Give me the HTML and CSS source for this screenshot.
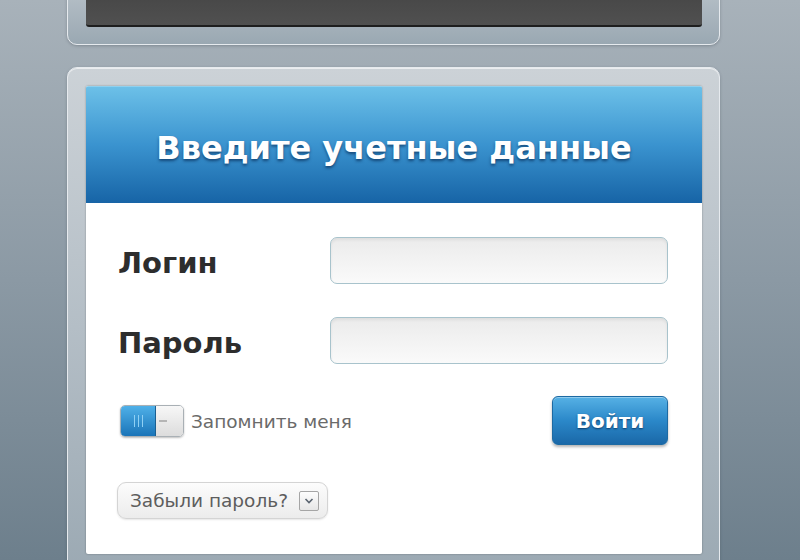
FILE: index.html
```html
<!DOCTYPE html>
<html lang="ru">
<head>
	<meta charset="UTF-8">
	<title>Вход</title>
<link rel="stylesheet" href="styles.css">
</head>
<body>
	<div class="wrap">
		<div class="frame frame_top">
			<div class="dark_bar"></div>
		</div>
		<div class="frame frame_login">
			<div class="card">
				<div class="card_head">
					<h1>Введите учетные данные</h1>
				</div>
				<form class="card_body" onsubmit="return false">
					<div class="row">
						<label for="login">Логин</label>
						<input id="login" type="text">
					</div>
					<div class="row">
						<label for="pass">Пароль</label>
						<input id="pass" type="password">
					</div>
					<div class="row row_actions">
						<div class="remember">
							<span class="toggle">
								<span class="toggle_on"><i></i><i></i><i></i></span>
								<span class="toggle_off"></span>
							</span>
							<span class="remember_text">Запомнить меня</span>
						</div>
						<button class="btn_enter">Войти</button>
					</div>
					<div class="row row_forgot">
						<span class="forgot">Забыли пароль?
							<span class="forgot_arrow">
								<svg width="10" height="6" viewBox="0 0 10 6"><path d="M1.5 1 L5 4.5 L8.5 1" fill="none" stroke="#5a6470" stroke-width="1.6"/></svg>
							</span>
						</span>
					</div>
				</form>
			</div>
		</div>
	</div>
</body>
</html>
```

FILE: styles.css
```css
html,body{
	margin: 0;
	height: 100%;
}
body{
	background: linear-gradient(to bottom, #a8b2ba 0%, #8b99a4 50%, #6d7f8c 100%);
	font-family: "DejaVu Sans", Verdana, sans-serif;
	overflow: hidden;
}
.wrap{
	width: 653px;
	margin-left: 67px;
}
.frame{
	box-sizing: border-box;
	border-radius: 10px;
	background: linear-gradient(to bottom, #ccd2d7 0%, #b4bec6 50%, #9aa8b2 100%);
	border: 1px solid #e6eaee;
	box-shadow: 0 1px 3px rgba(60,70,80,0.35), inset 0 1px 0 rgba(255,255,255,0.6);
}
.frame_top{
	margin-top: -56px;
	padding: 18px 17px 17px 18px;
}
.dark_bar{
	height: 62px;
	border-radius: 3px;
	background: linear-gradient(to bottom, #3e3e3e, #505050);
	border-bottom: 2px solid #1e1e1e;
}
.frame_login{
	margin-top: 22px;
	padding: 18px 17px 20px 18px;
	height: 520px;
}
.card{
	background: #fff;
	border-radius: 2px;
	box-shadow: 0 0 2px rgba(0,0,0,0.35);
	overflow: hidden;
}
.card_head{
	height: 117px;
	padding-top: 5px;
	display: flex;
	align-items: center;
	justify-content: center;
	background: linear-gradient(to bottom, #6cc0e8 0%, #3a93cf 50%, #1764a6 100%);
	border-top: 1px solid #8fd0ee;
	box-sizing: border-box;
}
.card_head h1{
	margin: 0;
	color: #fff;
	font-size: 32px;
	font-weight: bold;
	text-shadow: 0 2px 3px rgba(0,30,70,0.6);
}
.card_body{
	padding: 34px 34px 35px 32px;
	margin: 0;
}
.row{
	display: flex;
	align-items: center;
	justify-content: space-between;
	margin-bottom: 33px;
}
.row label{
	font-size: 29px;
	font-weight: bold;
	color: #2d2d2d;
	padding-top: 4px;
}
.row input{
	box-sizing: border-box;
	width: 338px;
	height: 47px;
	border: 1px solid #a8c3cc;
	border-radius: 7px;
	background: linear-gradient(to bottom, #ebebeb, #fafafa);
	box-shadow: inset 0 2px 3px rgba(0,0,0,0.06);
	outline: none;
}
.row_actions{
	margin-bottom: 37px;
}
.remember{
	display: flex;
	align-items: center;
	padding-left: 2px;
}
.toggle{
	display: flex;
	width: 64px;
	height: 32px;
	box-sizing: border-box;
	border: 1px solid #a9b0b5;
	border-radius: 5px;
	overflow: hidden;
	box-shadow: 0 1px 2px rgba(0,0,0,0.25);
}
.toggle_on{
	width: 34px;
	display: flex;
	justify-content: center;
	align-items: center;
	gap: 3px;
	background: linear-gradient(to bottom, #4fb0e8, #1a74b8);
	border-right: 1px solid #1a5f91;
}
.toggle_on i{
	width: 1px;
	height: 12px;
	background: #8fd0f4;
}
.toggle_off{
	flex: 1;
	position: relative;
	background: linear-gradient(to bottom, #f7f7f7, #dcdcdc);
}
.toggle_off:before{
	content: "";
	position: absolute;
	left: 3px;
	top: 14px;
	width: 8px;
	height: 2px;
	background: #b5b5b5;
}
.remember_text{
	margin-left: 7px;
	font-size: 18.5px;
	color: #6a6a6a;
}
.btn_enter{
	width: 116px;
	height: 49px;
	border: 1px solid #1d6aa3;
	border-radius: 6px;
	background: linear-gradient(to bottom, #56b1e5 0%, #2b88c9 50%, #1a68a8 100%);
	color: #fff;
	font-family: "DejaVu Sans", Verdana, sans-serif;
	font-size: 20px;
	font-weight: bold;
	text-shadow: 0 1px 2px rgba(0,30,70,0.7);
	box-shadow: 0 2px 3px rgba(0,0,0,0.3), inset 0 1px 0 rgba(255,255,255,0.35);
	margin-top: -1px;
}
.row_forgot{
	margin-bottom: 0;
	justify-content: flex-start;
}
.forgot{
	display: inline-flex;
	align-items: center;
	height: 37px;
	box-sizing: border-box;
	padding: 0 8px 0 12px;
	margin-left: -1px;
	border: 1px solid #d4d4d4;
	border-radius: 9px;
	background: linear-gradient(to bottom, #fcfcfc, #ececec);
	box-shadow: 0 1px 2px rgba(0,0,0,0.1);
	font-size: 18.5px;
	color: #5d5d5d;
}
.forgot_arrow{
	display: inline-flex;
	align-items: center;
	justify-content: center;
	width: 20px;
	height: 20px;
	margin-left: 11px;
	box-sizing: border-box;
	border: 1px solid #a5a5a5;
	border-radius: 2px;
	background: linear-gradient(to bottom, #fdfdfd, #e6e6e6);
}
```
